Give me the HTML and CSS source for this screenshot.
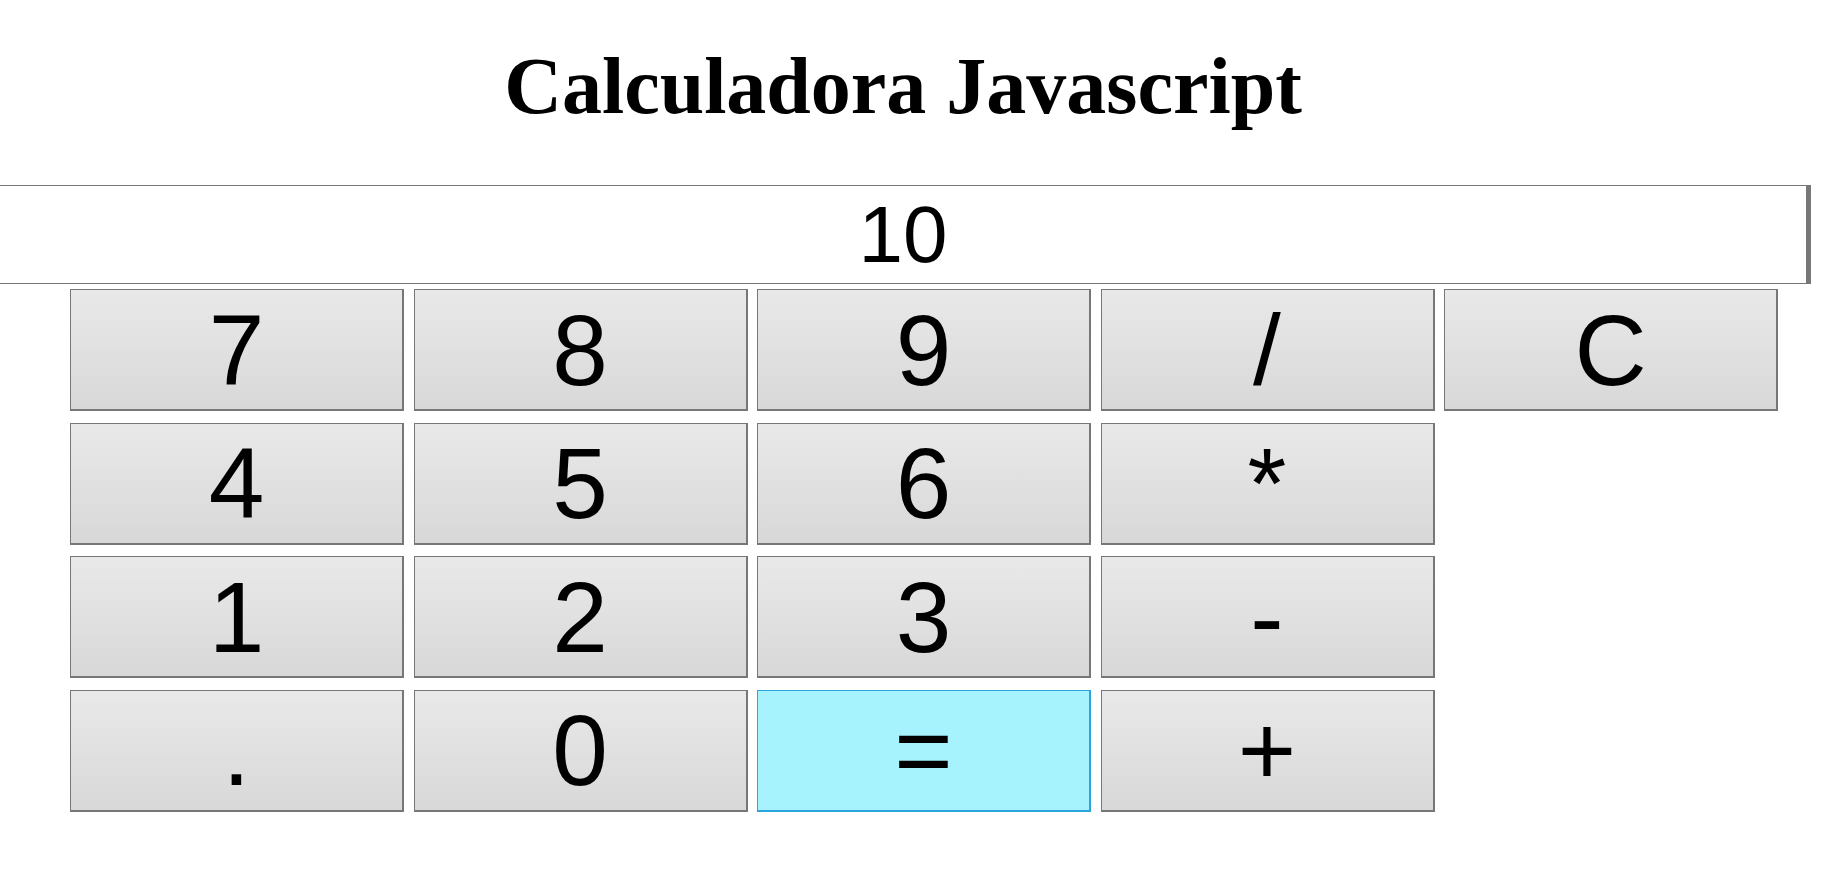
FILE: index.html
```html
<!DOCTYPE html>
<html lang="es">
<head>
<meta charset="utf-8">
<title>Calculadora Javascript</title>
<link rel="stylesheet" href="styles.css">
</head>
<body>
<h1 class="title">Calculadora Javascript</h1>
<input class="display" type="text" value="10" readonly>
<div class="keys">
  <button class="key">7</button>
  <button class="key">8</button>
  <button class="key">9</button>
  <button class="key">/</button>
  <button class="key">C</button>
  <button class="key">4</button>
  <button class="key">5</button>
  <button class="key">6</button>
  <button class="key">*</button>
  <span class="blank"></span>
  <button class="key">1</button>
  <button class="key">2</button>
  <button class="key">3</button>
  <button class="key">-</button>
  <span class="blank"></span>
  <button class="key">.</button>
  <button class="key">0</button>
  <button class="key key-equals">=</button>
  <button class="key">+</button>
</div>
</body>
</html>
```
FILE: styles.css
```css
html, body {
  margin: 0;
  padding: 0;
  background: #ffffff;
}

.title {
  margin: 42px 19px 55px 0;
  font-family: "Liberation Serif", "Times New Roman", serif;
  font-weight: bold;
  font-size: 80px;
  line-height: 88px;
  text-align: center;
  color: #000;
}

.display {
  display: block;
  box-sizing: border-box;
  width: 1811px;
  height: 99px;
  margin: 0;
  padding: 0;
  border-style: solid;
  border-color: #777777;
  border-width: 1px 5px 1px 0;
  background: #ffffff;
  font-family: "Liberation Sans", Arial, sans-serif;
  font-size: 80px;
  color: #000;
  text-align: center;
  outline: none;
}

.keys {
  display: grid;
  grid-template-columns: repeat(5, 334px);
  grid-auto-rows: 122px;
  column-gap: 9.5px;
  row-gap: 11.5px;
  margin-top: 5px;
  padding-left: 70px;
}

.key {
  box-sizing: border-box;
  margin: 0;
  padding: 0;
  border-style: solid;
  border-color: #777777;
  border-width: 1px 2px 2px 1px;
  border-radius: 0;
  background: linear-gradient(#e9e9e9, #d8d8d8);
  font-family: "Liberation Sans", Arial, sans-serif;
  font-size: 100px;
  line-height: 1;
  color: #000;
  text-align: center;
}

.key-equals {
  background: #a6f3fe;
  border-color: #2aa6dc;
}
```
